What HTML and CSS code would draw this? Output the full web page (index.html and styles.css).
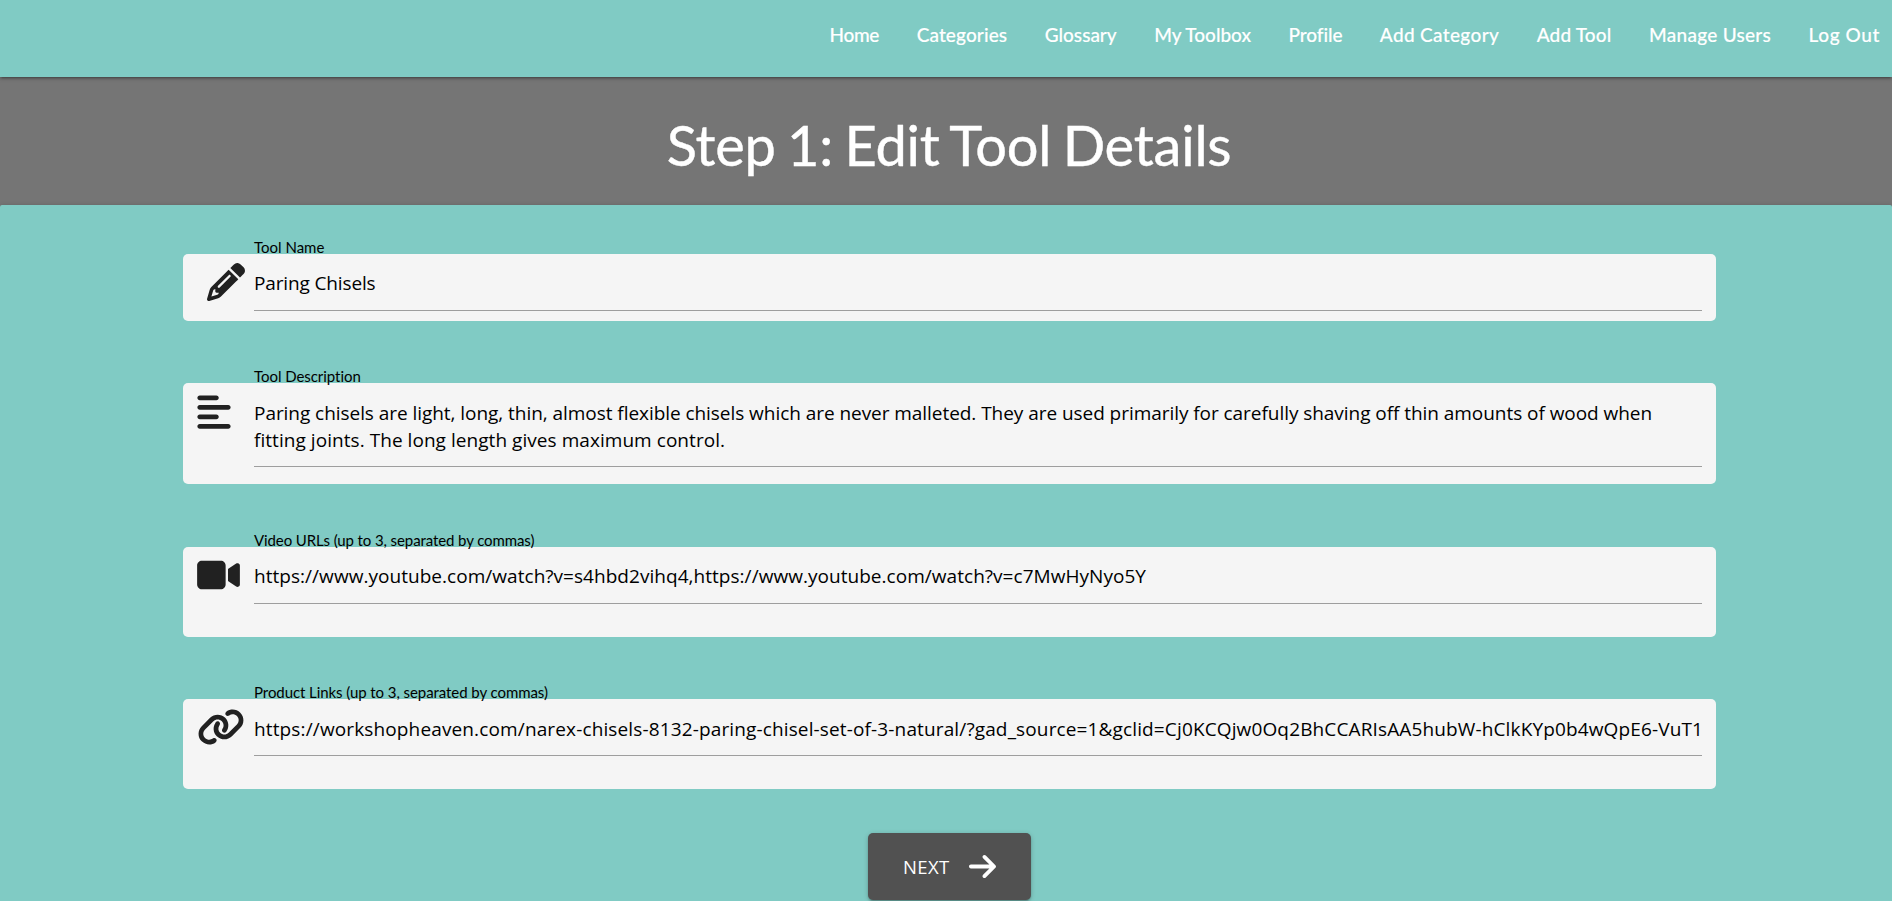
FILE: index.html
```html
<!DOCTYPE html>
<html lang="en">
<head>
<meta charset="utf-8">
<title>Edit Tool</title>
<link rel="stylesheet" href="styles.css">
</head>
<body>
<nav class="navbar">
<a class="nav-link home">Home</a>
<a class="nav-link categories">Categories</a>
<a class="nav-link glossary">Glossary</a>
<a class="nav-link toolbox">My Toolbox</a>
<a class="nav-link profile">Profile</a>
<a class="nav-link add-category">Add Category</a>
<a class="nav-link add-tool">Add Tool</a>
<a class="nav-link users">Manage Users</a>
<a class="nav-link logout">Log Out</a>
</nav>
<header class="banner"><h1 class="title">Step 1: Edit Tool Details</h1></header>
<main class="panel">
<form class="form">
<div class="field name">
<svg class="icon icon-pencil" viewBox="0 0 512 512"><path d="M410.300 231l11.300-11.300-33.900-33.900-62.100-62.100L291.700 89.800l-11.300 11.300-22.600 22.600L58.600 322.900c-10.400 10.400-18 23.300-22.200 37.400L1 480.700c-2.500 8.400-.2 17.500 6.100 23.700s15.300 8.500 23.700 6.100l120.300-35.400c14.100-4.200 27-11.800 37.400-22.200L387.700 253.700 410.300 231zM160 399.400l-9.100 22.700c-4 3.100-8.500 5.400-13.300 6.900L59.400 452l23-78.100c1.400-4.900 3.800-9.400 6.900-13.300l22.700-9.100v32c0 8.800 7.200 16 16 16h32zM362.700 18.700L348.300 33.200 325.700 55.800 314.300 67.100l33.900 33.900 62.100 62.100 33.900 33.900 11.300-11.300 22.600-22.600 14.500-14.500c25-25 25-65.500 0-90.500L453.300 18.700c-25-25-65.500-25-90.500 0zm-47.400 168l-144 144c-6.200 6.200-16.400 6.200-22.600 0s-6.200-16.400 0-22.600l144-144c6.200-6.200 16.400-6.200 22.600 0s6.200 16.400 0 22.600z"/></svg>
<label class="label">Tool Name</label>
<div class="value">Paring Chisels</div>
</div>
<div class="field description">
<svg class="icon icon-align" viewBox="0 0 448 512"><path d="M288 64c0 17.700-14.300 32-32 32H32C14.300 96 0 81.700 0 64S14.300 32 32 32H256c17.700 0 32 14.300 32 32zm0 256c0 17.700-14.300 32-32 32H32c-17.700 0-32-14.300-32-32s14.300-32 32-32H256c17.700 0 32 14.300 32 32zM0 192c0-17.700 14.300-32 32-32H416c17.700 0 32 14.300 32 32s-14.300 32-32 32H32c-17.700 0-32-14.300-32-32zM448 448c0 17.700-14.300 32-32 32H32c-17.700 0-32-14.300-32-32s14.300-32 32-32H416c17.700 0 32 14.300 32 32z"/></svg>
<label class="label">Tool Description</label>
<div class="value"><span class="line-first">Paring chisels are light, long, thin, almost flexible chisels which are never malleted. They are used primarily for carefully shaving off thin amounts of wood when</span><br><span class="line-last">fitting joints. The long length gives maximum control.</span></div>
</div>
<div class="field video">
<svg class="icon icon-video" viewBox="0 0 576 512"><path d="M0 128C0 92.700 28.700 64 64 64H320c35.300 0 64 28.700 64 64V384c0 35.300-28.700 64-64 64H64c-35.300 0-64-28.700-64-64V128zM559.100 99.800c10.400 5.600 16.900 16.400 16.900 28.200V384c0 11.800-6.500 22.600-16.900 28.200s-23 5-32.900-1.600l-96-64L416 337.100V320 192 174.900l14.200-9.500 96-64c9.800-6.500 22.400-7.200 32.900-1.600z"/></svg>
<label class="label">Video URLs (up to 3, separated by commas)</label>
<div class="value">https://www.youtube.com/watch?v=s4hbd2vihq4,https://www.youtube.com/watch?v=c7MwHyNyo5Y</div>
</div>
<div class="field links">
<svg class="icon icon-link" viewBox="0 0 640 512"><path d="M579.800 267.700c56.500-56.500 56.500-148 0-204.500c-50-50-128.800-56.500-186.300-15.400l-1.600 1.100c-14.400 10.300-17.700 30.300-7.400 44.600s30.300 17.700 44.600 7.400l1.600-1.100c32.100-22.900 76-19.300 103.800 8.600c31.500 31.500 31.500 82.500 0 114L422.300 334.800c-31.500 31.500-82.500 31.500-114 0c-27.900-27.900-31.500-71.800-8.600-103.800l1.100-1.600c10.300-14.400 6.900-34.400-7.400-44.600s-34.400-6.900-44.600 7.400l-1.100 1.600C206.500 251.200 213 330 263 380c56.500 56.500 148 56.500 204.500 0L579.800 267.700zM60.200 244.300c-56.500 56.500-56.500 148 0 204.500c50 50 128.800 56.500 186.300 15.400l1.600-1.100c14.400-10.300 17.700-30.300 7.400-44.600s-30.300-17.700-44.600-7.400l-1.600 1.100c-32.100 22.900-76 19.300-103.800-8.600C74 372 74 321 105.500 289.500L217.700 177.200c31.500-31.500 82.500-31.500 114 0c27.900 27.900 31.500 71.800 8.600 103.900l-1.100 1.600c-10.300 14.400-6.900 34.400 7.400 44.600s34.400 6.900 44.600-7.400l1.100-1.600C433.500 260.800 427 182 377 132c-56.500-56.500-148-56.500-204.500 0L60.200 244.300z"/></svg>
<label class="label">Product Links (up to 3, separated by commas)</label>
<div class="value">https://workshopheaven.com/narex-chisels-8132-paring-chisel-set-of-3-natural/?gad_source=1&amp;gclid=Cj0KCQjw0Oq2BhCCARIsAA5hubW-hClkKYp0b4wQpE6-VuT1</div>
</div>
<button class="next" type="button"><span>NEXT</span><svg class="icon-arrow" viewBox="0 0 448 512"><path d="M438.600 278.600c12.500-12.500 12.500-32.800 0-45.300l-160-160c-12.500-12.500-32.800-12.500-45.300 0s-12.500 32.800 0 45.300L338.800 224 32 224c-17.700 0-32 14.300-32 32s14.300 32 32 32l306.700 0L233.400 393.400c-12.500 12.500-12.500 32.800 0 45.300s32.800 12.500 45.300 0l160-160z"/></svg></button>
</form>
</main>
</body>
</html>
```
FILE: styles.css
```css
* { box-sizing: border-box; }
html, body { height: 100%; overflow: hidden; }
body { margin: 0; background: #757575; font-family: Lato, sans-serif; font-variant-ligatures: none; }

.navbar { position: relative; height: 77px; padding-right: 12px; display: flex; justify-content: flex-end; gap: 37.5px; background: #80cbc4; box-shadow: 0 2px 2px rgba(0,0,0,.14), 0 3px 1px -2px rgba(0,0,0,.12), 0 1px 5px rgba(0,0,0,.2); color: #fff; font-size: 19px; font-weight: 500; line-height: 70px; -webkit-text-stroke: .15px #fff; }
.nav-link { white-space: nowrap; }
.home { letter-spacing: -.3px; }
.categories { letter-spacing: .12px; }
.profile { letter-spacing: -.1px; }
.add-category { letter-spacing: .34px; }
.add-tool { letter-spacing: .19px; }
.users { letter-spacing: .27px; }
.logout { letter-spacing: .6px; }

.banner { height: 128px; padding: 34px 0 0 6px; text-align: center; color: #fff; }
.title { margin: 0; font-size: 56px; line-height: 67px; font-weight: 400; letter-spacing: -.24px; word-spacing: -2.7px; -webkit-text-stroke: .4px #fff; }

.panel { height: 720px; background: #80cbc4; border-radius: 2px; padding: 49px 176px 0 183px; box-shadow: 0 2px 2px rgba(0,0,0,.14), 0 3px 1px -2px rgba(0,0,0,.12), 0 1px 5px rgba(0,0,0,.2); }
.form { display: flex; flex-direction: column; }
.field { position: relative; background: #f5f5f5; border-radius: 5px; padding: 0 14px 0 71px; }
.value { font-family: "Open Sans", sans-serif; font-size: 19px; line-height: 27px; white-space: nowrap; border-bottom: 1px solid #9e9e9e; color: #000; }
.label { position: absolute; left: 71px; top: -17px; font-size: 15px; line-height: 20px; white-space: nowrap; color: #000; }
.icon { position: absolute; fill: #212121; }

.name { height: 67px; margin-bottom: 62px; padding-top: 16px; }
.name .value { height: 41px; letter-spacing: -.14px; }
.description { height: 101px; margin-bottom: 63px; padding-top: 17px; }
.description .value { height: 67px; }
.description .label { letter-spacing: -.05px; }
.line-first { letter-spacing: -.05px; }
.line-last { letter-spacing: .05px; }
.video { height: 90px; margin-bottom: 62px; padding-top: 16px; }
.video .value { height: 41px; letter-spacing: .04px; }
.video .label { letter-spacing: -.1px; }
.links { height: 90px; margin-bottom: 44px; padding-top: 17px; }
.links .value { height: 40px; letter-spacing: .135px; }
.links .label { letter-spacing: -.07px; }

.icon-pencil { left: 24px; top: 9px; width: 38px; height: 38px; }
.icon-align { left: 14px; top: 9.5px; width: 34px; height: 38px; }
.icon-video { left: 14px; top: 8.5px; width: 43px; height: 38px; }
.icon-link { left: 14px; top: 9px; width: 48px; height: 38px; }

.next { align-self: center; width: 163px; height: 67px; border: 0; border-radius: 5px; background: #515151; color: #fff; display: flex; align-items: center; padding: 0 0 0 35px; gap: 19.5px; font-family: "Open Sans", sans-serif; font-size: 18.5px; letter-spacing: .35px; box-shadow: 0 2px 2px rgba(0,0,0,.14), 0 3px 1px -2px rgba(0,0,0,.12), 0 1px 5px rgba(0,0,0,.2); }
.icon-arrow { width: 27px; height: 31px; fill: #fff; }
```
